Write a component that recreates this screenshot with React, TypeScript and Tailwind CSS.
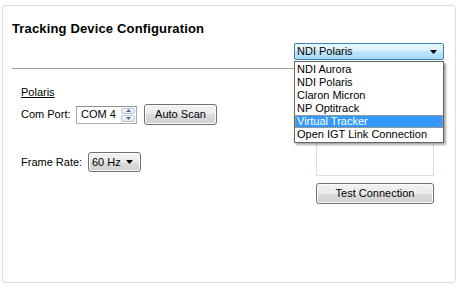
const items = ["NDI Aurora", "NDI Polaris", "Claron Micron", "NP Optitrack", "Virtual Tracker", "Open IGT Link Connection"];

function Arrow() {
  return (
    <svg width="7" height="4" viewBox="0 0 7 4" className="block">
      <path d="M0 0h7L3.5 4z" fill="#000" />
    </svg>
  );
}

const winButton =
  "border border-[#707070] rounded-[3px] bg-[linear-gradient(#f2f2f2_0%,#ebebeb_50%,#dddddd_50%,#cfcfcf_100%)] shadow-[inset_0_0_0_1px_#fcfcfc] text-[11px] text-black flex items-center justify-center";

export default function App() {
  return (
    <div className="relative w-[460px] h-[288px] bg-white pl-[2px] pt-[5px] font-['Liberation_Sans',Arial,sans-serif] text-[11px] text-black">
      <div className="w-[454px] h-[278px] border border-[#d5dfe5] rounded-[3px] flex flex-col">
        <h1 className="ml-[9px] mt-[15px] text-[13px] leading-[16px] font-bold tracking-[0.15px]">Tracking Device Configuration</h1>

        <div className="flex justify-end mt-[6px] pr-[11px]">
          <div className="w-[150px] h-[17px] border border-[#3c7fb1] rounded-[2px] bg-[linear-gradient(#eaf6fd_0%,#d9f0fc_50%,#bee6fd_50%,#a7d9f5_100%)] flex items-center justify-between pl-[2px] pr-[6px]">
            <span className="leading-[13px]">NDI Polaris</span>
            <Arrow />
          </div>
        </div>

        <div className="ml-[9px] mr-[10px] mt-[8px] h-px bg-[#a0a0a0]" />

        <div className="flex mt-[17px]">
          <div className="ml-[18px] w-[200px] flex flex-col">
            <span className="underline leading-[13px]">Polaris</span>
            <div className="flex items-center mt-[5px]">
              <span className="w-[55px]">Com Port:</span>
              <div className="w-[61px] h-[18px] border border-[#abadb3] border-t-[#8e8f8f] flex items-center justify-between pl-[4px] pr-px bg-white">
                <span>COM 4</span>
                <div className="w-[14px] h-[14px] flex flex-col gap-px">
                  <div className="flex-1 border border-[#b9c6d6] rounded-[2px] bg-[linear-gradient(#f5f8fb,#e3e9ef)] flex items-center justify-center">
                    <svg width="5" height="3" viewBox="0 0 5 3"><path d="M2.5 0L5 3H0z" fill="#4a6a93" /></svg>
                  </div>
                  <div className="flex-1 border border-[#b9c6d6] rounded-[2px] bg-[linear-gradient(#f5f8fb,#e3e9ef)] flex items-center justify-center">
                    <svg width="5" height="3" viewBox="0 0 5 3"><path d="M0 0h5L2.5 3z" fill="#4a6a93" /></svg>
                  </div>
                </div>
              </div>
              <div className={`${winButton} ml-[7px] w-[73px] h-[21px]`}>Auto Scan</div>
            </div>
            <div className="flex items-center mt-[27px]">
              <span className="w-[67px]">Frame Rate:</span>
              <div className={`${winButton} w-[53px] h-[20px] justify-between! pl-[3px] pr-[7px]`}>
                <span>60 Hz</span>
                <Arrow />
              </div>
            </div>
          </div>

          <div className="ml-[95px] mt-[3px] flex flex-col">
            <div className="w-[118px] h-[87px] border border-[#d5dfe5]" />
            <div className={`${winButton} mt-[7px] w-[118px] h-[21px]`}>Test Connection</div>
          </div>
        </div>
      </div>

      <ul className="absolute left-[294px] top-[61px] w-[150px] border border-[#646464] bg-white py-px shadow-[2px_2px_2px_rgba(0,0,0,0.35)]">
        {items.map((item) => (
          <li
            key={item}
            className={`h-[13px] leading-[13px] pl-[2px] ${
              item === "Virtual Tracker" ? "bg-[#3399ff] text-white outline-1 outline-dotted outline-[#e89a3c] -outline-offset-1" : ""
            }`}
          >
            {item}
          </li>
        ))}
      </ul>
    </div>
  );
}
